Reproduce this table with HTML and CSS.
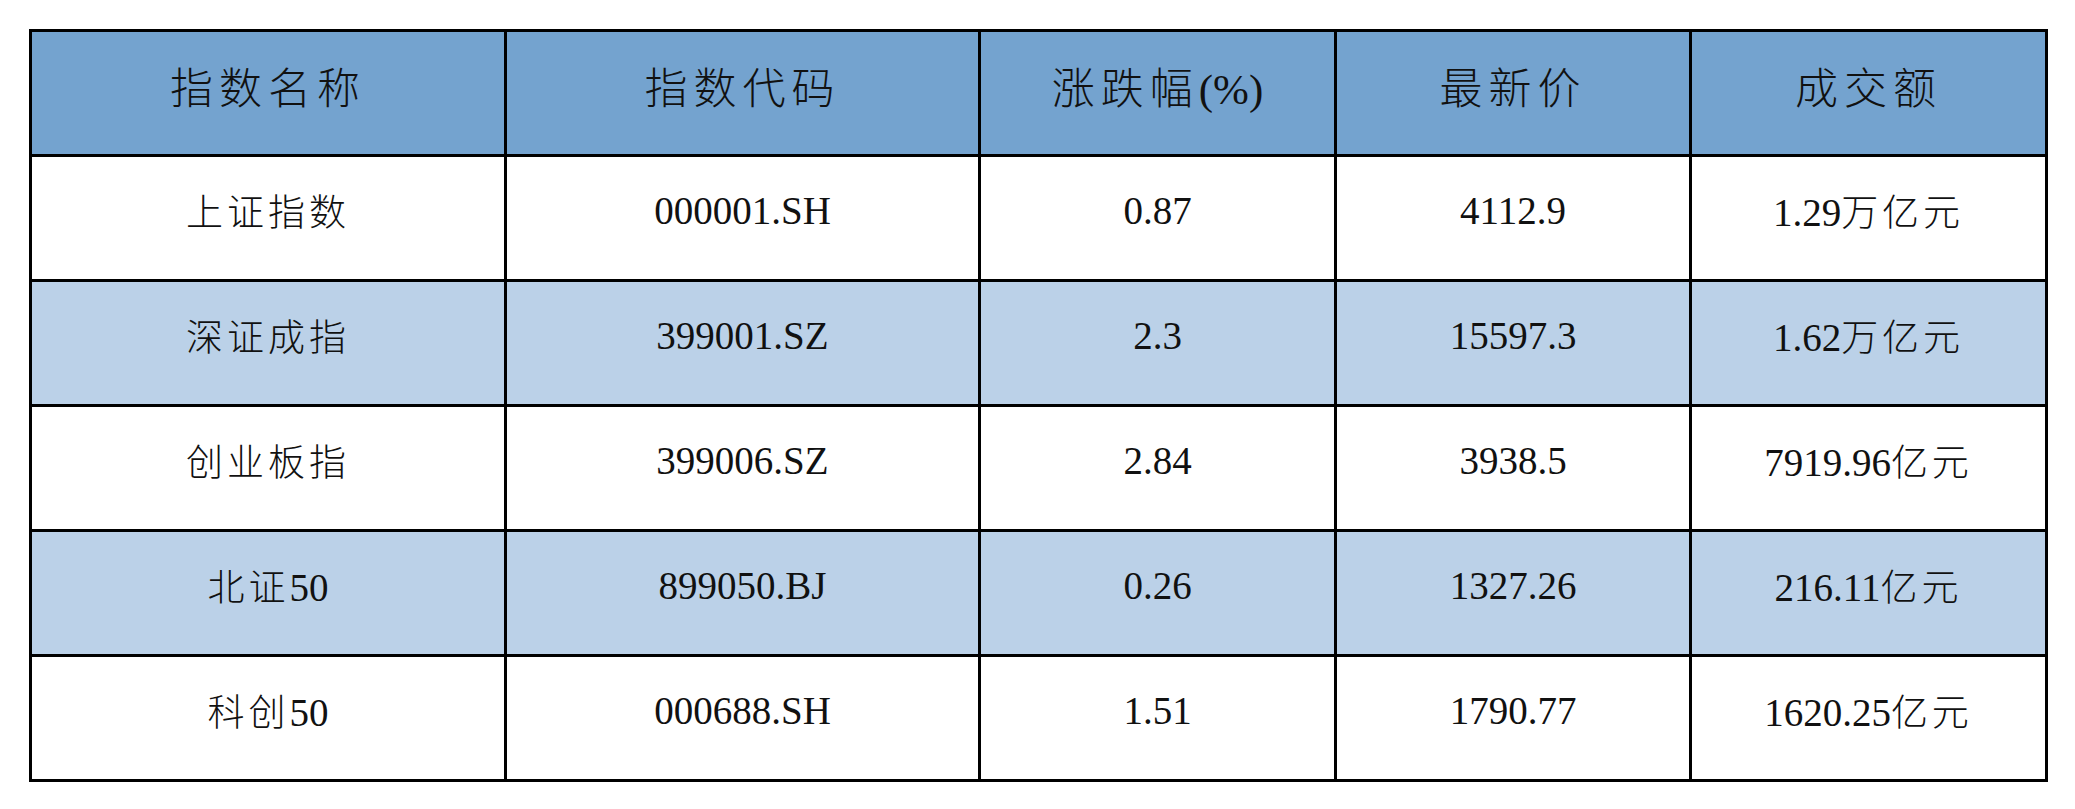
FILE: index.html
```html
<!DOCTYPE html>
<html lang="zh-CN">
<head>
<meta charset="utf-8">
<title>指数行情</title>
<link rel="stylesheet" href="styles.css">
</head>
<body>
<div class="page">
<table class="quotes">
  <colgroup>
    <col class="c-name">
    <col class="c-code">
    <col class="c-chg">
    <col class="c-price">
    <col class="c-amt">
  </colgroup>
  <thead>
    <tr>
      <th>指数名称</th>
      <th>指数代码</th>
      <th>涨跌幅<span class="num">(%)</span></th>
      <th>最新价</th>
      <th>成交额</th>
    </tr>
  </thead>
  <tbody>
    <tr>
      <td>上证指数</td>
      <td class="num">000001.SH</td>
      <td class="num">0.87</td>
      <td class="num">4112.9</td>
      <td><span class="num">1.29</span>万亿元</td>
    </tr>
    <tr class="alt">
      <td>深证成指</td>
      <td class="num">399001.SZ</td>
      <td class="num">2.3</td>
      <td class="num">15597.3</td>
      <td><span class="num">1.62</span>万亿元</td>
    </tr>
    <tr>
      <td>创业板指</td>
      <td class="num">399006.SZ</td>
      <td class="num">2.84</td>
      <td class="num">3938.5</td>
      <td><span class="num">7919.96</span>亿元</td>
    </tr>
    <tr class="alt">
      <td>北证<span class="num">50</span></td>
      <td class="num">899050.BJ</td>
      <td class="num">0.26</td>
      <td class="num">1327.26</td>
      <td><span class="num">216.11</span>亿元</td>
    </tr>
    <tr>
      <td>科创<span class="num">50</span></td>
      <td class="num">000688.SH</td>
      <td class="num">1.51</td>
      <td class="num">1790.77</td>
      <td><span class="num">1620.25</span>亿元</td>
    </tr>
  </tbody>
</table>
</div>
</body>
</html>
```
FILE: styles.css
```css
html, body {
  margin: 0;
  padding: 0;
  background: #ffffff;
}

.page {
  padding: 29px 0 0 29px;
}

.quotes {
  border-collapse: collapse;
  table-layout: fixed;
  width: 2019px;
  font-family: "Liberation Serif", "Noto Sans CJK SC", serif;
  color: #111111;
}

.c-name { width: 475px; }
.c-code { width: 474px; }
.c-chg { width: 356px; }
.c-price { width: 355px; }
.c-amt { width: 356px; }

.quotes tr {
  height: 125px;
}

.quotes th,
.quotes td {
  border: 3px solid #000000;
  text-align: center;
  vertical-align: middle;
  padding: 0 0 16px 0;
  font-weight: 300;
}

.quotes th {
  background: #74a3cf;
  font-size: 43px;
  letter-spacing: 6px;
}

.quotes td {
  background: #ffffff;
  font-size: 37px;
  letter-spacing: 4px;
}

.quotes .num {
  font-family: "Liberation Serif", serif;
  font-weight: 400;
  letter-spacing: 0;
  font-size: 39px;
}

.quotes th .num {
  font-size: 43px;
}

.quotes tr.alt td {
  background: #bbd1e8;
}
```
